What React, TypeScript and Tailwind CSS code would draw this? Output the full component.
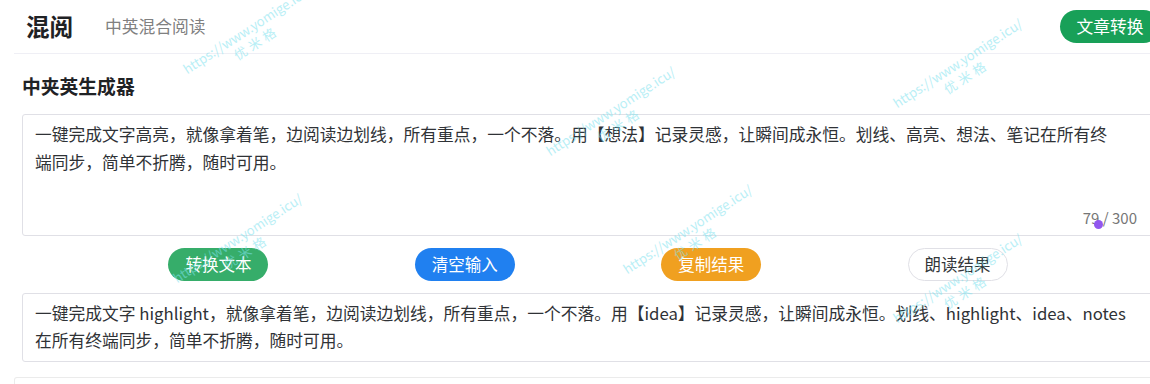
import React from "react";

const FONT = '"Noto Sans CJK SC", "Noto Sans", sans-serif';

const marks: { x: number; y: number }[] = [
  { x: 252, y: 36 },
  { x: 615, y: 118 },
  { x: 962, y: 70 },
  { x: 242, y: 245 },
  { x: 692, y: 236 },
  { x: 962, y: 285 },
];

function Watermark({ x, y }: { x: number; y: number }) {
  return (
    <div
      className="absolute pointer-events-none select-none text-[13px] leading-[16px] text-[#7fe3ef] opacity-55 text-center"
      style={{ left: x - 90, top: y - 16, width: 180, transform: "rotate(-33deg)" }}
    >
      <div>https://www.yomige.icu/</div>
      <div className="tracking-[4px]">优米格</div>
    </div>
  );
}

export default function App() {
  const input =
    "一键完成文字高亮，就像拿着笔，边阅读边划线，所有重点，一个不落。用【想法】记录灵感，让瞬间成永恒。划线、高亮、想法、笔记在所有终端同步，简单不折腾，随时可用。";
  const output =
    "一键完成文字 highlight，就像拿着笔，边阅读边划线，所有重点，一个不落。用【idea】记录灵感，让瞬间成永恒。划线、highlight、idea、notes 在所有终端同步，简单不折腾，随时可用。";
  return (
    <div
      className="relative w-[1150px] h-[384px] overflow-hidden bg-white text-[#333639]"
      style={{ fontFamily: FONT }}
    >
      <div className="w-[1176px]">
        {/* Header */}
        <div className="mx-[14px] h-[54px] border-b border-[#efeff5] flex items-center pl-[12px] pr-[2px]">
          <div className="text-[23.5px] font-bold text-[#1f2225] leading-none">混阅</div>
          <div className="ml-[32px] text-[16.75px] text-[#808080] leading-none">中英混合阅读</div>
          <div className="ml-auto h-[33px] w-[100px] rounded-full bg-[#18a058] text-white text-[16.75px] flex items-center justify-center">
            文章转换
          </div>
        </div>

        {/* Section */}
        <div className="px-[22px]">
          <div className="mt-[19px] text-[18.8px] font-bold text-[#1f2225] leading-[26px]">中夹英生成器</div>

          <div className="relative mt-[15px] h-[122px] border border-[#e0e0e6] rounded-[3px] pl-[12px] pr-[40px] pt-[5px]">
            <div className="text-[16.75px] leading-[28px] text-[#2f3236]">{input}</div>
            <div className="absolute right-[16px] bottom-[8px] text-[15px] text-[#767676] leading-[18px]">
              79 / 300
            </div>
          </div>

          <div className="mt-[12px] flex justify-evenly">
            <div className="h-[33px] w-[100px] rounded-full bg-[#36ad6a] text-white text-[16.5px] flex items-center justify-center">
              转换文本
            </div>
            <div className="h-[33px] w-[100px] rounded-full bg-[#2080f0] text-white text-[16.5px] flex items-center justify-center">
              清空输入
            </div>
            <div className="h-[33px] w-[100px] rounded-full bg-[#f0a020] text-white text-[16.5px] flex items-center justify-center">
              复制结果
            </div>
            <div className="h-[33px] w-[100px] rounded-full border border-[#e0e0e6] bg-white text-[#333639] text-[16.5px] flex items-center justify-center">
              朗读结果
            </div>
          </div>

          <div className="mt-[12px] h-[69px] border border-[#e0e0e6] rounded-[3px] pl-[12px] pr-[16px] pt-[6px]">
            <div className="text-[16.75px] leading-[27px] text-[#2f3236]">{output}</div>
          </div>
        </div>

        <div className="mx-[14px] mt-[15px] h-[20px] border-t border-x border-[#ebebeb] rounded-t-[3px]" />
      </div>

      {/* cursor dot */}
      <div className="absolute left-[1094px] top-[220px] w-[9px] h-[9px] rounded-full bg-[#9257ef]" />

      {marks.map((m, i) => (
        <Watermark key={i} x={m.x} y={m.y} />
      ))}
    </div>
  );
}
